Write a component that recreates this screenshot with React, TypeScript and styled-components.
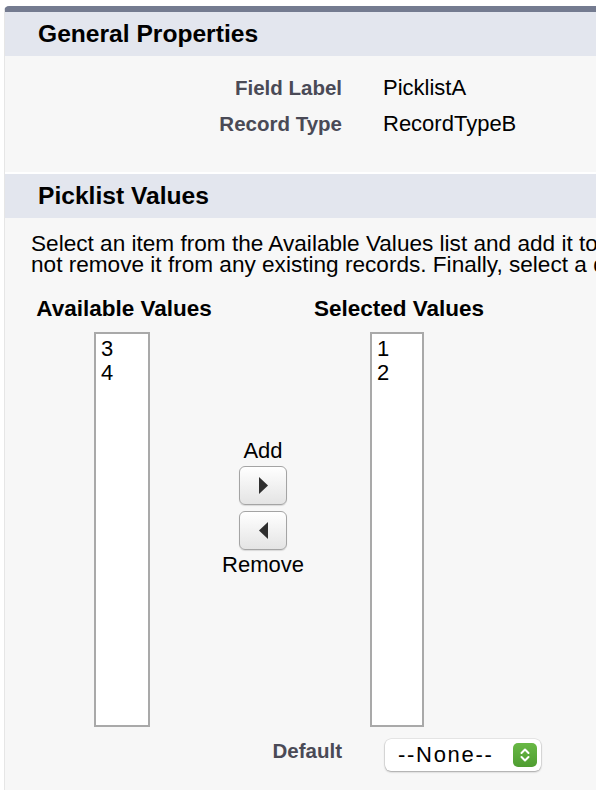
import React from "react";
import styled, { createGlobalStyle } from "styled-components";

const GlobalStyle = createGlobalStyle`
  html, body {
    margin: 0;
    padding: 0;
    background: #ffffff;
    overflow: hidden;
  }
  body {
    font-family: "Liberation Sans", Arial, Helvetica, sans-serif;
    color: #000;
  }
`;

const Page = styled.div`
  padding: 6px 0 0 4px;
  width: 1200px;
`;

const Panel = styled.div`
  border-top: 6px solid #747b90;
  border-left: 1px solid #e6e6e6;
  border-top-left-radius: 5px;
  background: #ffffff;
`;

const SectionHeader = styled.div<{ $gap?: boolean }>`
  height: 44px;
  display: flex;
  align-items: center;
  padding-left: 33px;
  background: #e3e6ee;
  margin-top: ${(p) => (p.$gap ? "2px" : "0")};

  h2 {
    margin: 0;
    font-size: 24.6px;
    font-weight: bold;
    color: #000;
  }
`;

const SectionBody = styled.div<{ $height?: number }>`
  background: #f7f7f7;
  ${(p) => (p.$height ? `height: ${p.$height}px;` : "")}
  box-sizing: border-box;
`;

const DetailGrid = styled.div`
  display: grid;
  grid-template-columns: 337px auto;
  column-gap: 41px;
  row-gap: 12px;
  padding-top: 20px;
  align-items: center;
`;

const Label = styled.span`
  text-align: right;
  font-size: 20.5px;
  font-weight: bold;
  color: #4a4a56;
  line-height: 24px;
`;

const Value = styled.span`
  font-size: 22px;
  line-height: 24px;
  color: #000;
`;

const Intro = styled.p`
  margin: 0;
  padding: 15px 0 0 26px;
  font-size: 22.6px;
  line-height: 21px;
  white-space: nowrap;
`;

const Dueling = styled.div`
  display: grid;
  grid-template-columns: 176px 102px 170px;
  padding: 22px 0 0 31px;
`;

const Column = styled.div`
  display: flex;
  flex-direction: column;
  align-items: center;
`;

const ColTitle = styled.div`
  font-size: 22.5px;
  font-weight: bold;
  line-height: 24px;
  white-space: nowrap;
  margin-bottom: 11px;
`;

const ListBox = styled.div<{ $width: number }>`
  width: ${(p) => p.$width}px;
  height: 395px;
  margin-right: 4px;
  box-sizing: border-box;
  border: 2px solid #a9a9a9;
  background: #ffffff;
  padding: 3px 0 0 5px;
  font-size: 22px;
  line-height: 24px;
`;

const Mover = styled.div`
  display: flex;
  flex-direction: column;
  align-items: center;
  padding-top: 142px;
  font-size: 22px;
  line-height: 24px;
`;

const ArrowButton = styled.button`
  width: 48px;
  height: 39px;
  margin: 3px 0;
  padding: 0;
  border: 1px solid #a4a4a4;
  border-radius: 6px;
  background: linear-gradient(#ffffff, #e4e4e4);
  box-shadow: 0 1px 1px rgba(0, 0, 0, 0.12);
  display: flex;
  align-items: center;
  justify-content: center;
`;

const DefaultRow = styled.div`
  display: grid;
  grid-template-columns: 337px auto;
  column-gap: 43px;
  padding-top: 12px;
  height: 60px;
  align-items: start;
`;

const Select = styled.div`
  width: 156px;
  height: 32px;
  box-sizing: border-box;
  background: #ffffff;
  border-radius: 6px;
  box-shadow: 0 1px 2px rgba(0, 0, 0, 0.3), 0 0 0 0.5px rgba(0, 0, 0, 0.12);
  display: flex;
  align-items: center;
  justify-content: space-between;
  padding: 0 4px 0 13px;
  font-size: 22px;
  letter-spacing: 1.7px;
`;

const Stepper = styled.span`
  width: 24px;
  height: 24px;
  border-radius: 5px;
  background: linear-gradient(#68b845, #4f9d31);
  display: flex;
  align-items: center;
  justify-content: center;
`;

function Triangle({ dir }: { dir: "left" | "right" }) {
  const pts = dir === "right" ? "1,0 10,8.5 1,17" : "10,0 1,8.5 10,17";
  return (
    <svg width="11" height="17" viewBox="0 0 11 17">
      <polygon points={pts} fill="#2f2f2f" />
    </svg>
  );
}

function Chevrons() {
  return (
    <svg width="12" height="16" viewBox="0 0 12 16">
      <path d="M2.5 6 L6 2.5 L9.5 6" stroke="#fff" strokeWidth="2" fill="none" strokeLinecap="round" strokeLinejoin="round" />
      <path d="M2.5 10 L6 13.5 L9.5 10" stroke="#fff" strokeWidth="2" fill="none" strokeLinecap="round" strokeLinejoin="round" />
    </svg>
  );
}

export default function App() {
  return (
    <>
      <GlobalStyle />
      <Page>
        <Panel>
          <SectionHeader>
            <h2>General Properties</h2>
          </SectionHeader>
          <SectionBody $height={116}>
            <DetailGrid>
              <Label>Field Label</Label>
              <Value>PicklistA</Value>
              <Label>Record Type</Label>
              <Value>RecordTypeB</Value>
            </DetailGrid>
          </SectionBody>

          <SectionHeader $gap>
            <h2>Picklist Values</h2>
          </SectionHeader>
          <SectionBody>
            <Intro>
              Select an item from the Available Values list and add it to the Selected Values list. Removing a value from the Selected Values list does
              <br />
              not remove it from any existing records. Finally, select a default value for the picklist.
            </Intro>
            <Dueling>
              <Column>
                <ColTitle>Available Values</ColTitle>
                <ListBox $width={56}>
                  <div>3</div>
                  <div>4</div>
                </ListBox>
              </Column>
              <Mover>
                <span>Add</span>
                <ArrowButton aria-label="Add">
                  <Triangle dir="right" />
                </ArrowButton>
                <ArrowButton aria-label="Remove">
                  <Triangle dir="left" />
                </ArrowButton>
                <span>Remove</span>
              </Mover>
              <Column>
                <ColTitle>Selected Values</ColTitle>
                <ListBox $width={54}>
                  <div>1</div>
                  <div>2</div>
                </ListBox>
              </Column>
            </Dueling>
            <DefaultRow>
              <Label>Default</Label>
              <Select>
                <span>--None--</span>
                <Stepper>
                  <Chevrons />
                </Stepper>
              </Select>
            </DefaultRow>
          </SectionBody>
        </Panel>
      </Page>
    </>
  );
}
